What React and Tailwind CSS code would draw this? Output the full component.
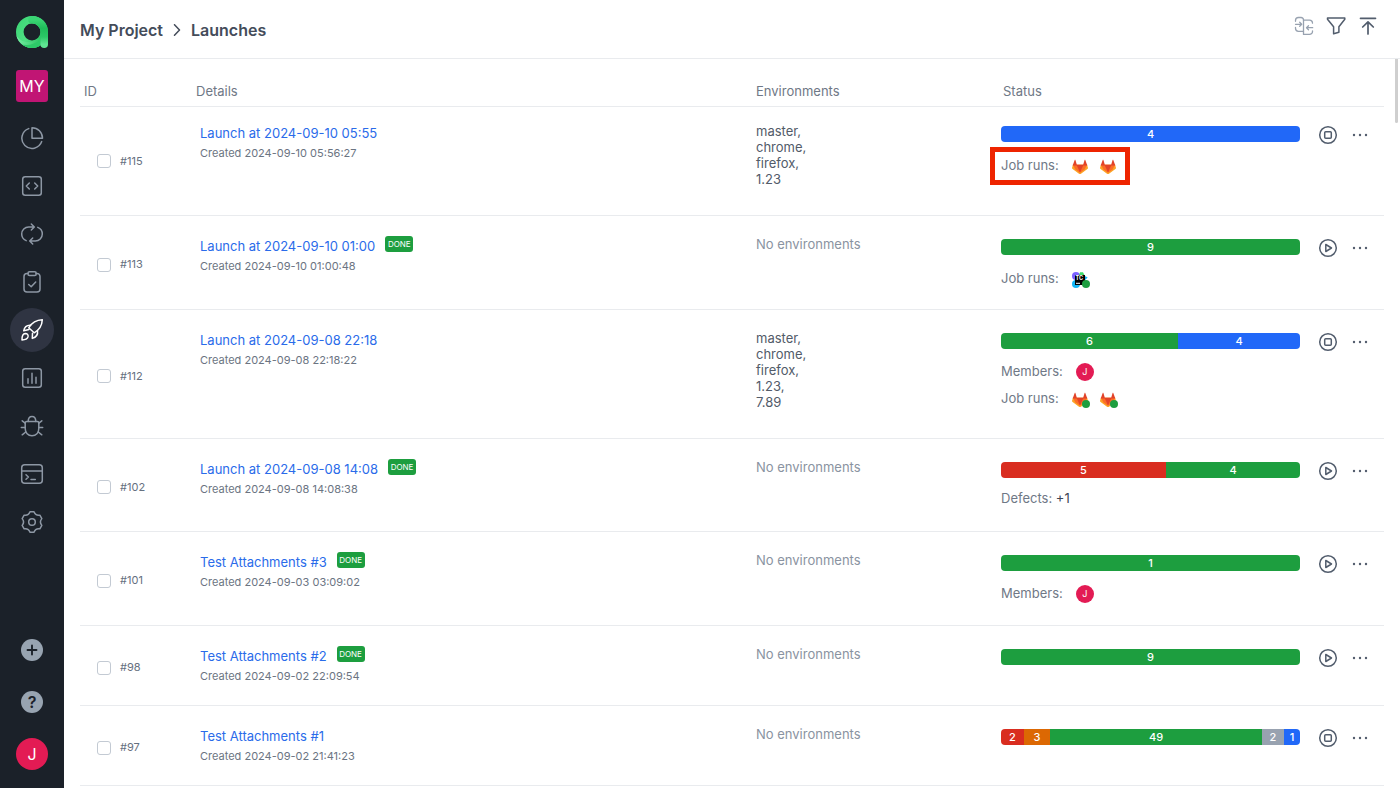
import React, { useState } from 'react';
import clsx from 'clsx';

const Icon = ({ children, size = 24, strokeWidth = 1.5, className }) => (
  <svg
    width={size}
    height={size}
    viewBox="0 0 24 24"
    fill="none"
    stroke="currentColor"
    strokeWidth={strokeWidth}
    strokeLinecap="round"
    strokeLinejoin="round"
    className={className}
    aria-hidden="true"
  >
    {children}
  </svg>
);

const Logo = () => (
  <svg width="32" height="32" viewBox="0 0 32 32" aria-hidden="true">
    <defs>
      <linearGradient id="ring" x1="0" y1="0.2" x2="1" y2="0.8">
        <stop offset="0" stopColor="#41d979" />
        <stop offset="0.45" stopColor="#4fdf84" />
        <stop offset="1" stopColor="#1fb857" />
      </linearGradient>
      <linearGradient id="stem" x1="0" y1="0" x2="0" y2="1">
        <stop offset="0" stopColor="#3ad574" />
        <stop offset="0.35" stopColor="#1fbd59" />
        <stop offset="0.7" stopColor="#2bc866" />
        <stop offset="1" stopColor="#5fe592" />
      </linearGradient>
      <linearGradient id="fold" x1="0" y1="0" x2="1" y2="0">
        <stop offset="0" stopColor="#7ff0a9" />
        <stop offset="1" stopColor="#2cc765" />
      </linearGradient>
      <clipPath id="ringClip">
        <path clipRule="evenodd" d="M16 0a16 16 0 1 0 0 32a16 16 0 1 0 0-32zM16 7.600a8.400 8.400 0 1 1 0 16.800a8.400 8.400 0 1 1 0-16.800z" />
      </clipPath>
    </defs>
    <circle cx="16" cy="16" r="12.2" fill="none" stroke="url(#ring)" strokeWidth="7.6" />
    <g clipPath="url(#ringClip)">
      <path d="M0 19c5 8.500 14.500 9 22 3l2.400 1.500v8.500H0z" fill="url(#fold)" opacity="0.85" />
      <path d="M3 27.500c7.500 3 15 1.500 21.400-4v8.500H3z" fill="#2dca68" />
    </g>
    <path d="M16 3.8c7.500 0 12.200 5.500 12.200 12.200v12.200" fill="none" stroke="url(#stem)" strokeWidth="7.6" strokeLinecap="round" />
  </svg>
);

const navItems = [
  {
    name: 'Dashboards',
    icon: (
      <>
        <path d="M12 1.700a10.500 10.500 0 0 1 10.500 10.500H12z" />
        <path d="M8.700 2.600A10.200 10.200 0 1 0 21.700 15.600" />
      </>
    ),
  },
  {
    name: 'Test cases',
    icon: (
      <>
        <rect x="2.700" y="2.700" width="18.600" height="18.600" rx="2.500" />
        <path d="M9.300 9l-3 3 3 3M14.700 9l3 3-3 3" />
      </>
    ),
  },
  {
    name: 'Shared steps',
    icon: (
      <>
        <path d="M6.200 18.600C3.400 17.500 1.700 14.800 1.700 12a7 7 0 0 1 7-7h5.500M11.300 2l3 3-3 3" />
        <path d="M17.800 5.400c2.800 1.100 4.500 3.800 4.500 6.600a7 7 0 0 1-7 7H9.800M12.700 16l-3 3 3 3" />
      </>
    ),
  },
  {
    name: 'Test plans',
    icon: (
      <>
        <path d="M8 3.500H7a3 3 0 0 0-3 3V19a3 3 0 0 0 3 3h10a3 3 0 0 0 3-3V6.500a3 3 0 0 0-3-3h-1" />
        <rect x="8" y="1.700" width="8.200" height="3.800" rx="1.500" />
        <path d="M8.700 14.500l2.500 2.300 4.500-4.800" />
      </>
    ),
  },
  {
    name: 'Launches',
    active: true,
    icon: (
      <>
        <path d="M22.300 1.800C16 2 12.300 4 8.700 9.800l5.500 5C20 11.500 22 8 22.300 1.800z" />
        <path d="M10.700 7.200c-4-.3-6.200 1.500-7 5.600l5.300-1.300" />
        <path d="M17.500 12.500c.600 4-1.300 6.800-5.200 7.900l.200-5.200" />
        <path d="M2 22c-.100-3.800.600-6.500 3.300-6.600 2 0 3.200 1.500 2.700 3.500C7.400 21 5 21.900 2 22z" />
      </>
    ),
  },
  {
    name: 'Analytics',
    icon: (
      <>
        <rect x="2.700" y="2.700" width="18.600" height="18.600" rx="2.500" />
        <path d="M8 12.800v4.400M12 7.200v10M16 11.200v6" />
      </>
    ),
  },
  {
    name: 'Defects',
    icon: (
      <>
        <path d="M5.200 9.200c0-1 .5-1.600 1.500-1.600h10.600c1 0 1.500.6 1.500 1.600V14.500c0 4.300-2.800 7.200-6.800 7.200s-6.800-2.900-6.800-7.200z" />
        <path d="M8.200 7.500c0-3.500 1.500-5 3.800-5s3.800 1.500 3.800 5" />
        <path d="M1.300 13.500h3.900M18.800 13.500h3.900M2.200 6.800l3 2.400M21.800 6.800l-3 2.400M2.200 20.800l3.500-2.800M21.800 20.800l-3.500-2.800" />
      </>
    ),
  },
  {
    name: 'Jobs',
    icon: (
      <>
        <rect x="1.700" y="2.700" width="20.600" height="18.600" rx="3" />
        <path d="M1.700 9h20.600M6 12.700l2.400 2.300L6 17.300M11 17.500h4.300" />
      </>
    ),
  },
  {
    name: 'Settings',
    icon: (
      <>
        <path d="M10 1.800h4Q15.500 5.900 19.850 5.180L21.830 8.610Q19 12 21.830 15.390L19.850 18.820Q15.500 18.100 14 22.200h-4Q8.500 18.100 4.150 18.820L2.170 15.390Q5 12 2.170 8.610L4.150 5.180Q8.500 5.900 10 1.800z" />
        <circle cx="12" cy="12" r="3.300" />
      </>
    ),
  },
];

const GREEN = 'bg-[#1d9e3f]';
const BLUE = 'bg-[#2168f8]';
const RED = 'bg-[#d92d20]';
const ORANGE = 'bg-[#dc6803]';
const GRAY = 'bg-[#98a2b0]';

// weight is the share of the bar, small segments keep room for their label
const launches = [
  {
    id: 115,
    name: 'Launch at 2024-09-10 05:55',
    created: '2024-09-10 05:56:27',
    env: ['master', 'chrome', 'firefox', '1.23'],
    bar: [{ count: 4, weight: 1, color: BLUE }],
    jobs: [{ type: 'gitlab' }, { type: 'gitlab' }],
    highlight: true,
  },
  {
    id: 113,
    name: 'Launch at 2024-09-10 01:00',
    created: '2024-09-10 01:00:48',
    done: true,
    env: [],
    bar: [{ count: 9, weight: 1, color: GREEN }],
    jobs: [{ type: 'teamcity', ok: true }],
  },
  {
    id: 112,
    name: 'Launch at 2024-09-08 22:18',
    created: '2024-09-08 22:18:22',
    env: ['master', 'chrome', 'firefox', '1.23', '7.89'],
    bar: [
      { count: 6, weight: 177, color: GREEN },
      { count: 4, weight: 122, color: BLUE },
    ],
    members: ['J'],
    jobs: [{ type: 'gitlab', ok: true }, { type: 'gitlab', ok: true }],
  },
  {
    id: 102,
    name: 'Launch at 2024-09-08 14:08',
    created: '2024-09-08 14:08:38',
    done: true,
    env: [],
    bar: [
      { count: 5, weight: 165, color: RED },
      { count: 4, weight: 134, color: GREEN },
    ],
    defects: '+1',
  },
  {
    id: 101,
    name: 'Test Attachments #3',
    created: '2024-09-03 03:09:02',
    done: true,
    env: [],
    bar: [{ count: 1, weight: 1, color: GREEN }],
    members: ['J'],
  },
  {
    id: 98,
    name: 'Test Attachments #2',
    created: '2024-09-02 22:09:54',
    done: true,
    env: [],
    bar: [{ count: 9, weight: 1, color: GREEN }],
  },
  {
    id: 97,
    name: 'Test Attachments #1',
    created: '2024-09-02 21:41:23',
    env: [],
    bar: [
      { count: 2, weight: 23, color: RED },
      { count: 3, weight: 26, color: ORANGE },
      { count: 49, weight: 212, color: GREEN },
      { count: 2, weight: 22, color: GRAY },
      { count: 1, weight: 16, color: BLUE },
    ],
  },
];

const GitlabIcon = () => (
  <svg width="16" height="16" viewBox="0 0 128 128" aria-hidden="true">
    <path fill="#fca326" d="M7.500 46L.400 70c-.6 2 .1 5 1.800 7L56 117q8 6 16 0L125.800 77c1.700-2 2.400-5 1.800-7L120.500 46z" />
    <path fill="#fc6d26" d="M64 110L28 84 6 46h116L100 84z" />
    <path fill="#e24329" d="M64 108L92 46H36z" />
    <path fill="#e24329" d="M5.500 52h35L27.300 7c-.7-2.200-4.900-2.200-5.600 0zM122.500 52H87.500L100.700 7c.7-2.200 4.900-2.200 5.600 0z" />
  </svg>
);

const TeamcityIcon = () => (
  <svg width="16" height="16" viewBox="0 0 16 16" aria-hidden="true">
    <circle cx="4" cy="4" r="4" fill="#7b61ff" />
    <path d="M8 .3h3l1.500 3H7z" fill="#3ddc6b" />
    <path d="M11 3l4.700 2.500L12 9z" fill="#12b5f5" />
    <circle cx="4" cy="12" r="4" fill="#12b5f5" />
    <rect x="3" y="3" width="10" height="10" fill="#000" />
    <text x="3.600" y="8.300" fontSize="5.500" fontWeight="700" fill="#fff" fontFamily="Inter, sans-serif">TC</text>
    <path d="M4 11.300h4" stroke="#fff" strokeWidth="1" />
  </svg>
);

const StatusBar = ({ segments }) => (
  <div className="flex h-4 overflow-hidden rounded-[4px]">
    {segments.map((s, i) => (
      <div
        key={i}
        className={clsx('flex basis-0 items-center justify-center text-[11px] leading-4 font-medium text-white', s.color)}
        style={{ flexGrow: s.weight }}
      >
        {s.count}
      </div>
    ))}
  </div>
);

const LaunchRow = ({ launch, checked, onToggle }) => {
  const running = !launch.done;
  return (
    <tr className="group h-20">
      <td className="border-b border-[#e9ebee] pt-1 pl-[17px] align-middle group-first:pt-0">
        <label className="flex items-center gap-[9px] text-[11px] text-[#667080]">
          <input
            type="checkbox"
            checked={checked}
            onChange={onToggle}
            className="size-[14px] appearance-none rounded-[3px] border border-[#c3cad3] bg-white checked:bg-[#2168f8]"
          />
          #{launch.id}
        </label>
      </td>
      <td className="border-b border-[#e9ebee] pt-5 pl-1 align-top group-first:pt-4">
        <div className="flex h-5 items-center gap-[10px]">
          <a href="#" className="text-[13px] leading-5 text-[#2a6bea]">{launch.name}</a>
          {launch.done && (
            <span className="mb-1 flex h-4 w-7 items-center justify-center rounded-[3px] bg-[#1d9e3f] text-[8px] leading-4 text-white">
              DONE
            </span>
          )}
        </div>
        <p className="text-[11px] leading-5 text-[#6b7482]">Created {launch.created}</p>
      </td>
      <td className="border-b border-[#e9ebee] pt-5 pb-7 align-top text-[13px] leading-4 group-first:pt-4">
        {launch.env.length === 0 ? (
          <span className="text-[#8a93a1]">No environments</span>
        ) : (
          <ul className="text-[#525b69]">
            {launch.env.map((e, i) => (
              <li key={e}>{e}{i < launch.env.length - 1 && ','}</li>
            ))}
          </ul>
        )}
      </td>
      <td className="border-b border-[#e9ebee] pt-5 pb-[18px] align-top text-[13px] text-[#6f7886] group-first:pt-4">
        <div className="flex flex-col gap-[10px] pt-[3px]">
          <StatusBar segments={launch.bar} />
          {(launch.members || launch.jobs || launch.defects) && (
            <div>
              {launch.members && (
                <div className="flex h-[26px] items-center gap-[13px]">
                  Members:
                  {launch.members.map((m) => (
                    <span key={m} className="flex size-[18px] items-center justify-center rounded-full bg-[#e31b54] text-[9px] text-white">
                      {m}
                    </span>
                  ))}
                </div>
              )}
              {launch.jobs && (
                <div className="relative flex h-[26px] items-center gap-[13px] pt-px">
                  Job runs:
                  <div className="flex gap-3 pt-[2px]">
                    {launch.jobs.map((job, i) => (
                      <a key={i} href="#" className="relative" aria-label={job.type}>
                        {job.type === 'gitlab' ? <GitlabIcon /> : <TeamcityIcon />}
                        {job.ok && <span className="absolute -right-[2px] bottom-0 size-2 rounded-full bg-[#1d9e3f]" />}
                      </a>
                    ))}
                  </div>
                  {launch.highlight && (
                    <span className="absolute -top-[5px] -left-[11px] h-[38px] w-[140px] border-[5px] border-[#ee2400]" />
                  )}
                </div>
              )}
              {launch.defects && (
                <div className="h-[25px] leading-5">
                  Defects: <span className="text-[#3d4654]">{launch.defects}</span>
                </div>
              )}
            </div>
          )}
        </div>
      </td>
      <td className="border-b border-[#e9ebee] pt-5 pl-4 align-top text-[#525d6d] group-first:pt-4">
        <div className="flex gap-2">
          <button type="button" className="size-6" aria-label={running ? 'Close launch' : 'Reopen launch'}>
            <Icon>
              <circle cx="12" cy="12" r="8.300" />
              {running ? <rect x="8.700" y="8.700" width="6.600" height="6.600" rx="1" /> : <path d="M9.800 8.500v7l5.700-3.500z" />}
            </Icon>
          </button>
          <button type="button" className="size-6" aria-label="More actions">
            <Icon>
              <g fill="currentColor" stroke="none">
                <circle cx="6" cy="12" r="1.200" />
                <circle cx="12" cy="12" r="1.200" />
                <circle cx="18" cy="12" r="1.200" />
              </g>
            </Icon>
          </button>
        </div>
      </td>
    </tr>
  );
};

const Sidebar = () => (
  <aside className="flex w-16 shrink-0 flex-col items-center bg-[#1b2129] pt-4 pb-2">
    <a href="#" aria-label="Home"><Logo /></a>
    <a href="#" className="mt-[22px] flex size-8 items-center justify-center rounded-[3px] bg-[#c11574] text-base text-white">
      MY
    </a>
    <nav className="mt-3">
      {navItems.map((item) => (
        <div key={item.name} className="flex h-12 items-center">
          <a
            href="#"
            aria-label={item.name}
            className={clsx(
              'flex size-11 items-center justify-center rounded-full',
              item.active ? 'bg-[#2f3442] text-white' : 'text-[#8d97a4]'
            )}
          >
            <Icon>{item.icon}</Icon>
          </a>
        </div>
      ))}
    </nav>
    <div className="mt-auto">
      <div className="flex h-[52px] items-center justify-center">
        <button type="button" aria-label="Create" className="flex size-[22px] items-center justify-center rounded-full bg-[#98a4b1] text-[#1b2129]">
          <Icon size={18} strokeWidth={2.5}><path d="M12 6v12M6 12h12" /></Icon>
        </button>
      </div>
      <div className="flex h-[52px] items-center justify-center">
        <button type="button" className="flex size-[22px] items-center justify-center rounded-full bg-[#98a4b1] text-base font-semibold text-[#1b2129]">
          ?
        </button>
      </div>
      <div className="flex h-[52px] items-center justify-center">
        <button type="button" className="flex size-8 items-center justify-center rounded-full bg-[#e31b54] text-base text-white">
          J
        </button>
      </div>
    </div>
  </aside>
);

export default function App() {
  const [selected, setSelected] = useState([]);

  const toggle = (id) => {
    setSelected((prev) => (prev.includes(id) ? prev.filter((x) => x !== id) : [...prev, id]));
  };

  return (
    <div className="flex h-screen overflow-hidden bg-white font-['Inter',sans-serif]">
      <Sidebar />
      <main className="flex min-w-0 flex-1 flex-col">
        <header className="flex h-[59px] shrink-0 items-center justify-between border-b border-[#e9ebee] pr-5 pl-4">
          <div className="flex items-center gap-2 pt-[2px] text-base font-semibold text-[#444c5a]">
            <a href="#">My Project</a>
            <Icon size={12} strokeWidth={3}><path d="M7 1.500L17 12 7 22.500" /></Icon>
            <h1>Launches</h1>
          </div>
          <div className="mb-[7px] flex gap-2 text-[#525d6d]">
            <button type="button" aria-label="Merge" className="text-[#98a2b0]">
              <Icon strokeWidth={1.300}>
                <path d="M3.500 7.300V6.500a3 3 0 0 1 3-3h2.500a2.500 2.500 0 0 1 2.500 2.700" />
                <path d="M3.500 13.500v.8a3 3 0 0 0 3 3h5" />
                <path d="M20.500 9.200a3 3 0 0 0-3-3h-6v14.200h6a3 3 0 0 0 3-3v-.6" />
                <path d="M3.500 10.300h6M7.700 8.300l2 2-2 2M20.700 13.700h-6M16.500 11.700l-2 2 2 2" />
              </Icon>
            </button>
            <button type="button" aria-label="Filter">
              <Icon><path d="M3.500 4h17.300v1.200L14.900 12.800v5.400l-5.300 1.600v-7L3.500 5.200z" /></Icon>
            </button>
            <button type="button" aria-label="Upload">
              <Icon strokeWidth={1.700}><path d="M4.500 4.300h15M12 20V8M6.700 13L12 7.800l5.300 5.200" /></Icon>
            </button>
          </div>
        </header>

        <section className="relative flex-1 overflow-hidden px-4">
          <table className="w-full table-fixed border-separate border-spacing-0">
            <colgroup>
              <col className="w-[116px]" />
              <col />
              <col className="w-[245px]" />
              <col className="w-[299px]" />
              <col className="w-[84px]" />
            </colgroup>
            <thead>
              <tr className="h-12 text-left text-[13px] text-[#6f7886]">
                <th className="border-b border-[#e9ebee] pt-[18px] pl-1 font-normal">ID</th>
                <th className="border-b border-[#e9ebee] pt-[18px] font-normal">Details</th>
                <th className="border-b border-[#e9ebee] pt-[18px] font-normal">Environments</th>
                <th className="border-b border-[#e9ebee] pt-[18px] pl-[2px] font-normal">Status</th>
                <th className="border-b border-[#e9ebee]" />
              </tr>
            </thead>
            <tbody>
              {launches.map((launch) => (
                <LaunchRow
                  key={launch.id}
                  launch={launch}
                  checked={selected.includes(launch.id)}
                  onToggle={() => toggle(launch.id)}
                />
              ))}
            </tbody>
          </table>
          {/* scroll thumb */}
          <div className="absolute top-0 right-[2px] h-16 w-[3px] rounded-b-full bg-[#cfcfcf]" />
        </section>
      </main>
    </div>
  );
}
